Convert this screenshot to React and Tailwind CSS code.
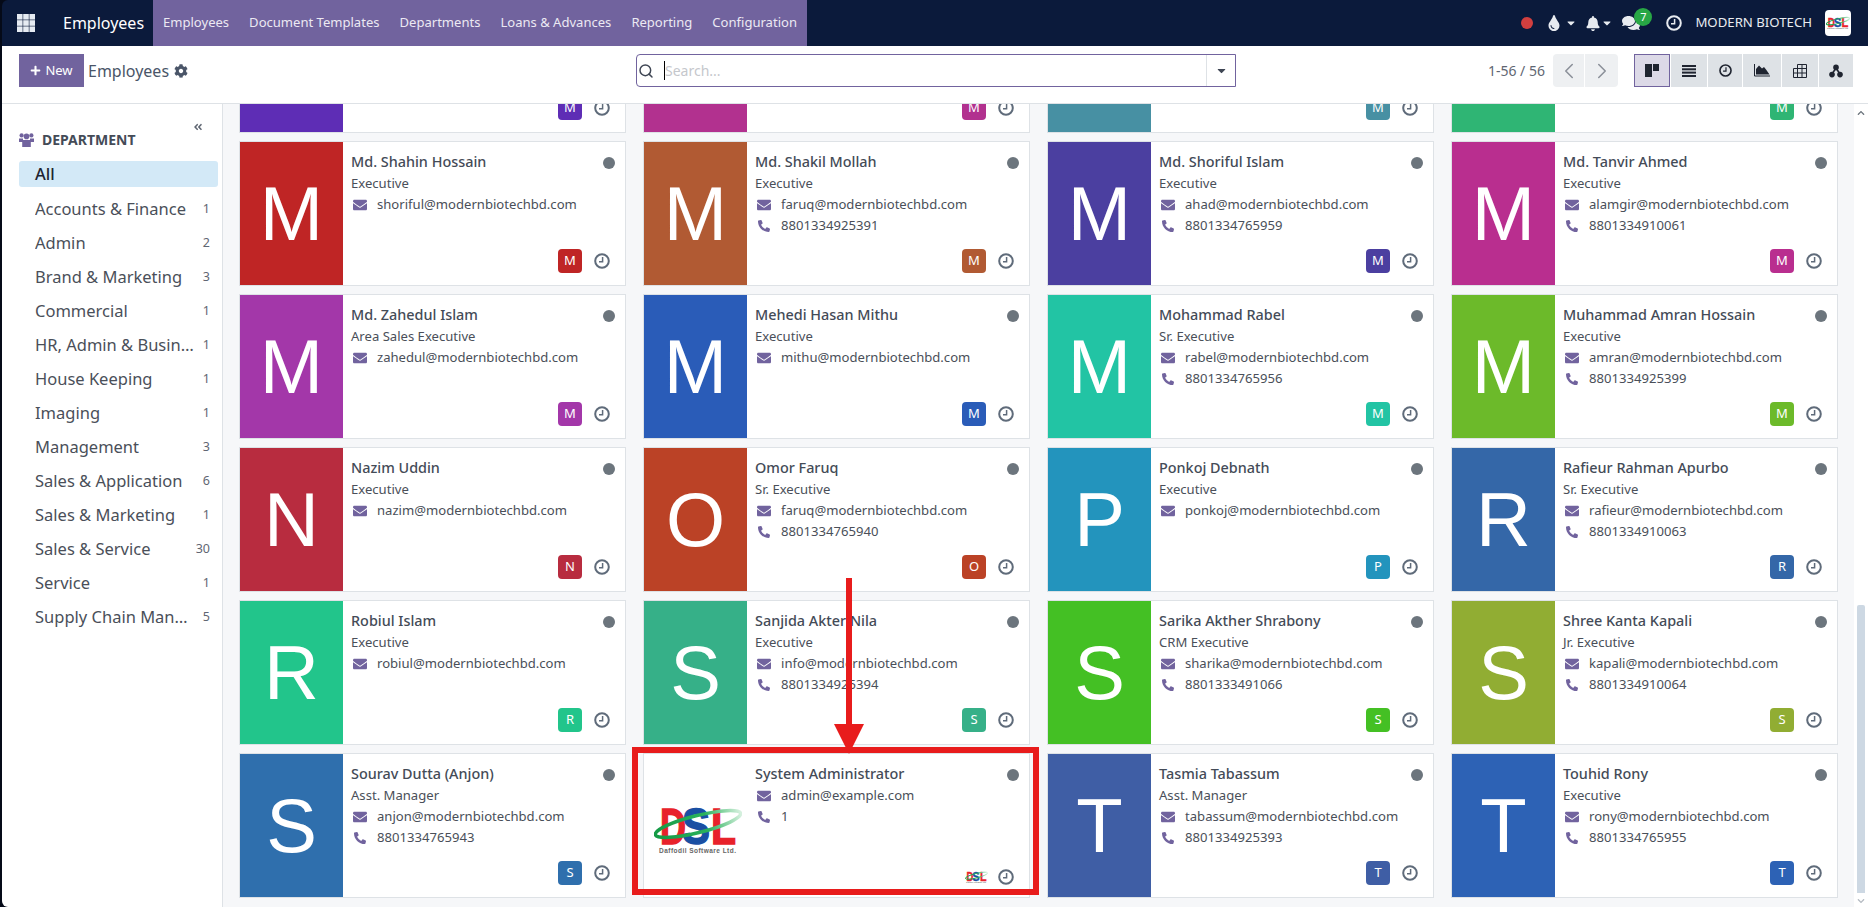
import { FaBell, FaCaretDown, FaAngleDoubleLeft, FaChevronDown, FaChevronUp, FaCog, FaComments, FaEnvelope, FaPhoneAlt, FaPlus, FaTint } from "react-icons/fa";
import { ChevronLeft, ChevronRight, Search } from "lucide-react";

const menu = ["Employees", "Document Templates", "Departments", "Loans & Advances", "Reporting", "Configuration"];

const departments = [
  ["Accounts & Finance", 1],
  ["Admin", 2],
  ["Brand & Marketing", 3],
  ["Commercial", 1],
  ["HR, Admin & Business", 1],
  ["House Keeping", 1],
  ["Imaging", 1],
  ["Management", 3],
  ["Sales & Application", 6],
  ["Sales & Marketing", 1],
  ["Sales & Service", 30],
  ["Service", 1],
  ["Supply Chain Management", 5],
];

const employees = [
  { letter: "M", color: "#5e2db5" },
  { letter: "M", color: "#b2318f" },
  { letter: "M", color: "#4790a3" },
  { letter: "M", color: "#2fb574" },
  { name: "Md. Shahin Hossain", job: "Executive", email: "shoriful@modernbiotechbd.com", letter: "M", color: "#bf2525" },
  { name: "Md. Shakil Mollah", job: "Executive", email: "faruq@modernbiotechbd.com", phone: "8801334925391", letter: "M", color: "#b15a33" },
  { name: "Md. Shoriful Islam", job: "Executive", email: "ahad@modernbiotechbd.com", phone: "8801334765959", letter: "M", color: "#4b3fa0" },
  { name: "Md. Tanvir Ahmed", job: "Executive", email: "alamgir@modernbiotechbd.com", phone: "8801334910061", letter: "M", color: "#b92e8f" },
  { name: "Md. Zahedul Islam", job: "Area Sales Executive", email: "zahedul@modernbiotechbd.com", letter: "M", color: "#a337a9" },
  { name: "Mehedi Hasan Mithu", job: "Executive", email: "mithu@modernbiotechbd.com", letter: "M", color: "#2a5cb8" },
  { name: "Mohammad Rabel", job: "Sr. Executive", email: "rabel@modernbiotechbd.com", phone: "8801334765956", letter: "M", color: "#22c4a4" },
  { name: "Muhammad Amran Hossain", job: "Executive", email: "amran@modernbiotechbd.com", phone: "8801334925399", letter: "M", color: "#6cba2a" },
  { name: "Nazim Uddin", job: "Executive", email: "nazim@modernbiotechbd.com", letter: "N", color: "#b82c3f" },
  { name: "Omor Faruq", job: "Sr. Executive", email: "faruq@modernbiotechbd.com", phone: "8801334765940", letter: "O", color: "#bb4226" },
  { name: "Ponkoj Debnath", job: "Executive", email: "ponkoj@modernbiotechbd.com", letter: "P", color: "#2394bd" },
  { name: "Rafieur Rahman Apurbo", job: "Sr. Executive", email: "rafieur@modernbiotechbd.com", phone: "8801334910063", letter: "R", color: "#3467a8" },
  { name: "Robiul Islam", job: "Executive", email: "robiul@modernbiotechbd.com", letter: "R", color: "#22c58b" },
  { name: "Sanjida Akter Nila", job: "Executive", email: "info@modernbiotechbd.com", phone: "8801334925394", letter: "S", color: "#36b088" },
  { name: "Sarika Akther Shrabony", job: "CRM Executive", email: "sharika@modernbiotechbd.com", phone: "8801333491066", letter: "S", color: "#44c024" },
  { name: "Shree Kanta Kapali", job: "Jr. Executive", email: "kapali@modernbiotechbd.com", phone: "8801334910064", letter: "S", color: "#91ad33" },
  { name: "Sourav Dutta (Anjon)", job: "Asst. Manager", email: "anjon@modernbiotechbd.com", phone: "8801334765943", letter: "S", color: "#2f6fad" },
  { name: "System Administrator", email: "admin@example.com", phone: "1", logo: true },
  { name: "Tasmia Tabassum", job: "Asst. Manager", email: "tabassum@modernbiotechbd.com", phone: "8801334925393", letter: "T", color: "#3f5ea5" },
  { name: "Touhid Rony", job: "Executive", email: "rony@modernbiotechbd.com", phone: "8801334765955", letter: "T", color: "#2d62b5" },
];

const DslLogo = ({ className }) => (
  <svg viewBox="0 0 88 48" className={className}>
    <defs>
      <linearGradient id="swoosh" x1="0" x2="1" y1="0" y2="0">
        <stop offset="0" stopColor="#149a45" />
        <stop offset="0.6" stopColor="#2bb25c" />
        <stop offset="1" stopColor="#d5f0de" />
      </linearGradient>
    </defs>
    <g fontFamily="Liberation Sans" fontWeight="700" fontSize="50" strokeWidth="1.5">
      <text x="6" y="37" fill="#e8222b" stroke="#e8222b" textLength="26" lengthAdjust="spacingAndGlyphs">D</text>
      <text x="57" y="37" fill="#e8222b" stroke="#e8222b" textLength="25" lengthAdjust="spacingAndGlyphs">L</text>
      <text x="28" y="37" fill="#1a4fa3" stroke="#1a4fa3" textLength="28" lengthAdjust="spacingAndGlyphs">S</text>
    </g>
    <ellipse cx="44" cy="17" rx="44" ry="8.5" transform="rotate(-14 44 17)" fill="none" stroke="url(#swoosh)" strokeWidth="3.5" />
    <text x="5" y="46" fontFamily="Liberation Sans" fontWeight="700" fontSize="6.5" fill="#666" textLength="77">Daffodil Software Ltd.</text>
  </svg>
);

const ClockIcon = ({ className }) => (
  <svg viewBox="0 0 16 16" className={className} fill="none" stroke="currentColor">
    <circle cx="8" cy="8" r="6.8" strokeWidth="2" />
    <path d="M8.6 4 V8.8 H5" strokeWidth="1.5" />
  </svg>
);

const AppsIcon = () => (
  <svg viewBox="0 0 18 18" className="w-[18px] h-[18px]" fill="#e6ebf2">
    {[0, 6.2, 12.4].map((y) =>
      [0, 6.2, 12.4].map((x) => <rect key={`${x}-${y}`} x={x} y={y} width="5.6" height="5.6" />)
    )}
  </svg>
);

const UsersIcon = () => (
  <svg viewBox="0 0 15 14" className="w-[15px] h-[14px]" fill="#71639e">
    <circle cx="2.6" cy="2.4" r="2.1" />
    <circle cx="12.4" cy="2.4" r="2.1" />
    <circle cx="7.5" cy="3.4" r="2.8" />
    <path d="M0 5.4 h4 v3.6 h-4 z M11 5.4 h4 v3.6 h-4 z" />
    <path d="M3.2 7 h8.6 v7 h-8.6 z" />
  </svg>
);

const KanbanIcon = () => (
  <svg viewBox="0 0 14 13" className="w-[14px] h-[13px]" fill="#1f2430">
    <rect x="0" y="0" width="7" height="13" />
    <rect x="8" y="0" width="6" height="7" />
  </svg>
);

const ListIcon = () => (
  <svg viewBox="0 0 14 12" className="w-[14px] h-[12px]" fill="#1f2430">
    <rect y="0" width="14" height="2" />
    <rect y="3.3" width="14" height="2" />
    <rect y="6.6" width="14" height="2" />
    <rect y="10" width="14" height="2" />
  </svg>
);

const AreaIcon = () => (
  <svg viewBox="0 0 16 13" className="w-[16px] h-[13px]" fill="#1f2430">
    <path d="M2 10.5 V5 L5 1.5 L8 4.5 L10 3 L12 5.5 L15.5 10.5 Z" />
    <path d="M0.5 0 V12 H16" fill="none" stroke="#1f2430" strokeWidth="1" />
  </svg>
);

const GridIcon = () => (
  <svg viewBox="0 0 14 14" className="w-[14px] h-[14px]" fill="none" stroke="#1f2430" strokeWidth="1">
    <path d="M4.5 0.5 H13.5 V13.5 H0.5 V4.5 H13.5 M0.5 9 H13.5 M4.5 0.5 V13.5 M9 0.5 V13.5" />
  </svg>
);

const HierarchyIcon = () => (
  <svg viewBox="0 0 14 14" className="w-[14px] h-[14px]" fill="#1f2430">
    <path d="M7 4 L3 10 M7 4 L11 10" stroke="#1f2430" strokeWidth="1.6" />
    <circle cx="7" cy="3.4" r="2.8" />
    <circle cx="3" cy="10.6" r="2.8" />
    <circle cx="11" cy="10.6" r="2.8" />
  </svg>
);

const EmployeeCard = ({ emp }) => (
  <div className="relative flex h-[145px] bg-white border border-[#dee2e6] text-[#4a4f59]">
    {emp.logo ? (
      <div className="w-[103px] shrink-0 flex items-center justify-center pt-[10px] pl-[4px]">
        <DslLogo className="w-[88px] h-[48px]" />
      </div>
    ) : (
      <div
        className="w-[103px] shrink-0 flex items-center justify-center text-white text-[76px] font-['Liberation_Sans',sans-serif]"
        style={{ backgroundColor: emp.color }}
      >
        {emp.letter}
      </div>
    )}
    <div className="flex-1 pl-[8px] pt-[9px] text-[13.1px] leading-[21px]">
      <div className="text-[14.4px] font-medium leading-[22px] text-[#444b57]">{emp.name}</div>
      {emp.job && <div>{emp.job}</div>}
      {emp.email && (
        <div className="flex items-center">
          <FaEnvelope className="w-[14px] h-[14px] ml-[2px] text-[#71639e]" />
          <span className="ml-[10px]">{emp.email}</span>
        </div>
      )}
      {emp.phone && (
        <div className="flex items-center">
          <FaPhoneAlt className="w-[12px] h-[12px] ml-[3px] mr-[1px] text-[#71639e]" />
          <span className="ml-[10px]">{emp.phone}</span>
        </div>
      )}
    </div>
    <span className="absolute top-[15px] right-[10px] w-[12px] h-[12px] rounded-full bg-[#6c757d]" />
    <div className="absolute right-[15px] bottom-[12px] flex items-center">
      {emp.logo ? (
        <DslLogo className="w-[23px] h-[13px] mr-[10px]" />
      ) : (
        <span
          className="w-[24px] h-[24px] mr-[12px] rounded-[4px] flex items-center justify-center text-white text-[13px]"
          style={{ backgroundColor: emp.color }}
        >
          {emp.letter}
        </span>
      )}
      <ClockIcon className="w-[16px] h-[16px] text-[#5f6b7a]" />
    </div>
  </div>
);

export default function App() {
  return (
    <div className="relative h-[907px] w-full overflow-hidden bg-[#050a18] pl-[2px] flex flex-col font-['Noto_Sans',sans-serif]">
      {/* top bar */}
      <header className="h-[46px] shrink-0 flex items-center bg-[#0b1a3b] text-[#e8ebf0] rounded-tl-[6px]">
        <span className="ml-[15px]"><AppsIcon /></span>
        <span className="ml-[28px] w-[90px] text-[16px] text-white">Employees</span>
        <nav className="h-full flex items-center bg-[#71639e]">
          {menu.map((item) => (
            <span key={item} className="px-[10px] text-[13.05px] text-[#ece9f3]">
              {item}
            </span>
          ))}
        </nav>
        <div className="ml-auto flex items-center pr-[17px]">
          <span className="w-[12px] h-[12px] rounded-full bg-[#d23f3f]" />
          <FaTint className="ml-[14px] w-[14px] h-[16px]" />
          <FaCaretDown className="ml-[4px] w-[12px] h-[12px]" />
          <FaBell className="ml-[9px] w-[14px] h-[15px]" />
          <FaCaretDown className="ml-[1px] w-[12px] h-[12px]" />
          <div className="relative ml-[9px]">
            <FaComments className="w-[18px] h-[18px]" />
            <span className="absolute -top-[6px] left-[12px] w-[18px] h-[18px] rounded-full bg-[#28a745] text-white text-[11px] flex items-center justify-center">7</span>
          </div>
          <ClockIcon className="ml-[26px] w-[16px] h-[16px]" />
          <span className="ml-[13px] text-[13.2px]">MODERN BIOTECH</span>
          <span className="ml-[13px] w-[26px] h-[26px] rounded-[4px] bg-white flex items-center justify-center">
            <DslLogo className="w-[24px] h-[14px]" />
          </span>
        </div>
      </header>

      {/* control panel */}
      <div className="h-[58px] shrink-0 bg-white border-b border-[#dee2e6] flex items-start pt-[8px] pl-[17px] pr-[15px]">
        <div className="w-[617px] flex items-center h-[33px]">
          <button className="h-[33px] w-[65px] bg-[#71639e] text-white text-[13px] flex items-center justify-center gap-[4px]">
            <FaPlus className="w-[11px] h-[11px]" />
            New
          </button>
          <span className="ml-[4px] text-[16px] text-[#4a5568]">Employees</span>
          <FaCog className="ml-[5px] w-[14px] h-[14px] text-[#4a5568]" />
        </div>
        <div className="w-[600px] h-[33px] border border-[#71639e] rounded-l-[4px] flex items-center">
          <Search className="ml-[1px] w-[16px] h-[16px] text-[#3f4654]" strokeWidth={2.2} />
          <span className="ml-[10px] w-px h-[19px] bg-black" />
          <span className="text-[14px] text-[#c5c7cc]">Search...</span>
          <div className="ml-auto w-[29px] h-full border-l border-[#dee2e6] flex items-center justify-center">
            <FaCaretDown className="w-[13px] h-[13px] text-[#3f4654]" />
          </div>
        </div>
        <div className="ml-auto flex items-center h-[33px]">
          <span className="text-[14px] whitespace-nowrap text-[#5f6672]">1-56 / 56</span>
          <div className="ml-[8px] flex h-[33px] rounded-[4px] bg-[#eef0f2] text-[#8b9099]">
            <span className="w-[32px] flex items-center justify-center border-r border-white"><ChevronLeft size={26} strokeWidth={1.4} /></span>
            <span className="w-[33px] flex items-center justify-center"><ChevronRight size={26} strokeWidth={1.4} /></span>
          </div>
          <div className="ml-[16px] flex h-[33px] gap-px text-[#1f2430]">
            <span className="w-[36px] flex items-center justify-center bg-[#dcd9e7] border border-[#71639e]"><KanbanIcon /></span>
            <span className="w-[36px] flex items-center justify-center bg-[#dee2e6]"><ListIcon /></span>
            <span className="w-[34px] flex items-center justify-center bg-[#dee2e6]"><ClockIcon className="w-[13px] h-[13px]" /></span>
            <span className="w-[38px] flex items-center justify-center bg-[#dee2e6]"><AreaIcon /></span>
            <span className="w-[36px] flex items-center justify-center bg-[#dee2e6]"><GridIcon /></span>
            <span className="w-[34px] flex items-center justify-center bg-[#dee2e6]"><HierarchyIcon /></span>
          </div>
        </div>
      </div>

      <div className="flex flex-1 min-h-0 rounded-bl-[6px] overflow-hidden">
        {/* department sidebar */}
        <aside className="w-[221px] shrink-0 bg-white border-r border-[#dee2e6] relative pl-[17px] pr-[4px] pt-[26px]">
          <FaAngleDoubleLeft className="absolute top-[18px] right-[19px] w-[10px] h-[10px] text-[#5f6672]" />
          <div className="flex items-center h-[19px] text-[14px] font-bold text-[#444b57]">
            <UsersIcon />
            <span className="ml-[8px]">DEPARTMENT</span>
          </div>
          <div className="mt-[12px] h-[26px] rounded-[3px] bg-[#d3e9f7] pl-[16px] flex items-center text-[16.5px] font-medium text-[#1f2430]">All</div>
          <div className="mt-[5px]">
            {departments.map(([name, count]) => (
              <div key={name} className="h-[34px] flex items-center pl-[16px] pr-[8px] text-[#4a4f59]">
                <span className="flex-1 min-w-0 truncate pr-[8px] text-[16.5px]">{name}</span>
                <span className="text-[12.5px] text-[#5f6672]">{count}</span>
              </div>
            ))}
          </div>
        </aside>

        {/* kanban cards */}
        <main className="flex-1 min-w-0 bg-[#f6f7f9] overflow-hidden pl-[16px] pr-[16px]">
          <div className="grid grid-cols-[repeat(4,387px)] gap-x-[17px] gap-y-[8px] -mt-[116px]">
            {employees.map((emp, i) => (
              <EmployeeCard key={i} emp={emp} />
            ))}
          </div>
        </main>

        {/* scrollbar */}
        <div className="w-[14px] shrink-0 bg-white flex flex-col items-center pt-[5px] pb-[2px] text-[#6c757d]">
          <FaChevronUp className="w-[8px] h-[8px]" />
          <div className="mt-auto w-[8px] h-[288px] rounded-t-[2px] bg-[#cdd8e3]" />
          <FaChevronDown className="mt-[4px] w-[8px] h-[8px] text-[#b5bbc2]" />
        </div>
      </div>

      {/* red annotation */}
      <div className="absolute left-[632px] top-[747px] w-[407px] h-[148px] border-[6px] border-[#e81c1c]" />
      <svg viewBox="0 0 30 176" className="absolute left-[834px] top-[578px] w-[30px] h-[176px]">
        <rect x="12" y="0" width="6" height="148" fill="#e81c1c" />
        <polygon points="0,146 30,146 15,176" fill="#e81c1c" />
      </svg>
    </div>
  );
}
